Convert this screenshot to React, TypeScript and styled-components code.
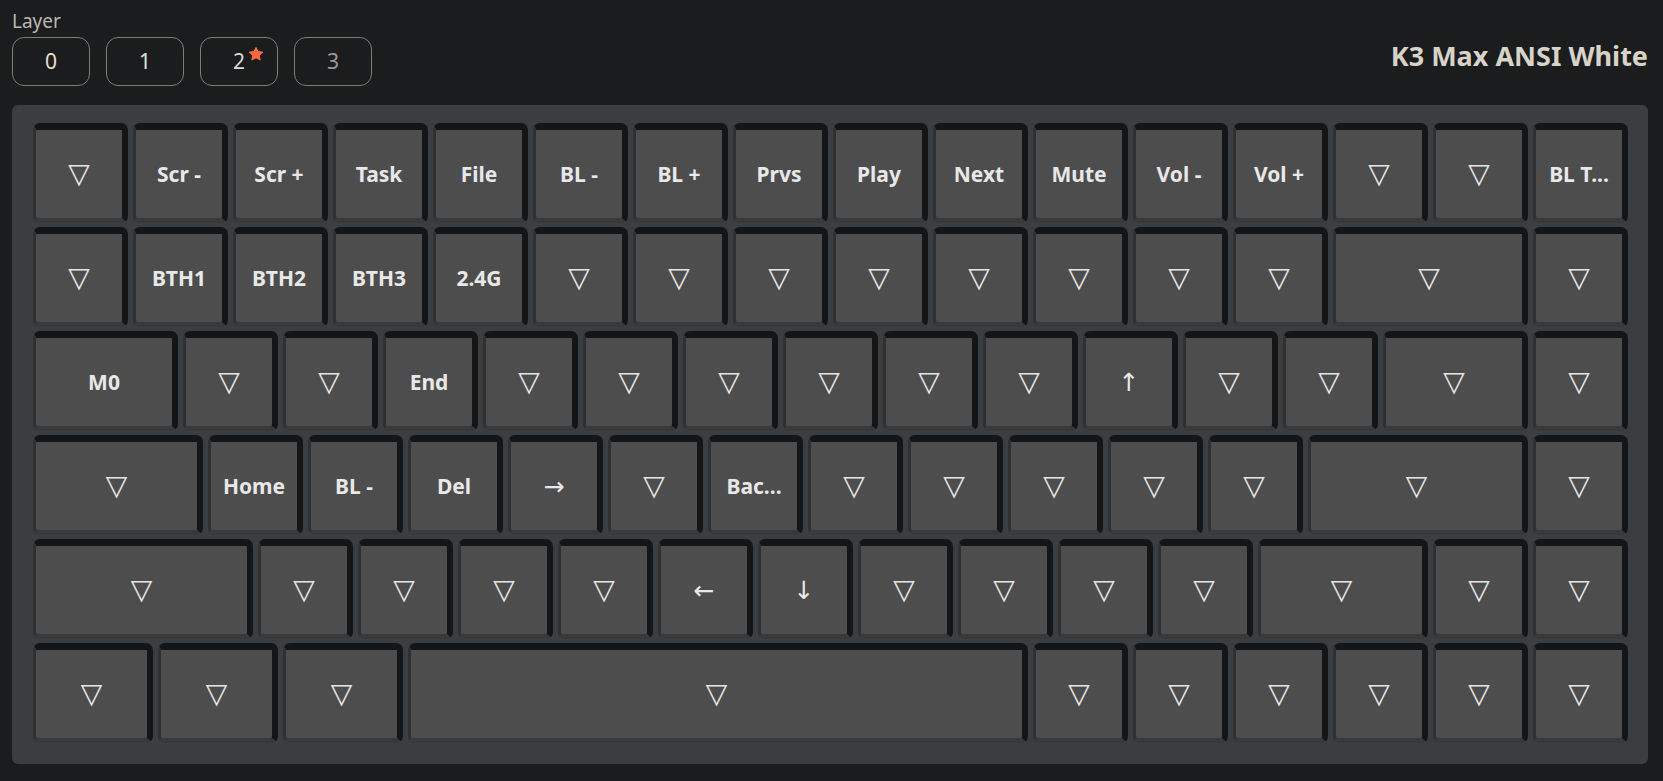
import { createGlobalStyle, styled } from "styled-components";

const GlobalStyle = createGlobalStyle`
  body {
    margin: 0;
    background: #1b1c1e;
    font-family: "Noto Sans", "Open Sans", sans-serif;
  }
`;

type KeyDef = { label: string; u?: number };

const T = "▽";
const ARROWS = ["↑", "↓", "←", "→"];
const k = (label: string, u = 1): KeyDef => ({ label, u });
const trns = (n: number): KeyDef[] => Array.from({ length: n }, () => k(T));

const rows: KeyDef[][] = [
  [
    k(T), k("Scr -"), k("Scr +"), k("Task"), k("File"), k("BL -"), k("BL +"),
    k("Prvs"), k("Play"), k("Next"), k("Mute"), k("Vol -"), k("Vol +"),
    k(T), k(T), k("BL T..."),
  ],
  [k(T), k("BTH1"), k("BTH2"), k("BTH3"), k("2.4G"), ...trns(8), k(T, 2), k(T)],
  [
    k("M0", 1.5), k(T), k(T), k("End"), ...trns(6), k("↑"), k(T), k(T),
    k(T, 1.5), k(T),
  ],
  [
    k(T, 1.75), k("Home"), k("BL -"), k("Del"), k("→"), k(T), k("Bac..."),
    ...trns(5), k(T, 2.25), k(T),
  ],
  [
    k(T, 2.25), ...trns(4), k("←"), k("↓"), ...trns(4), k(T, 1.75), k(T), k(T),
  ],
  [k(T, 1.25), k(T, 1.25), k(T, 1.25), k(T, 6.25), ...trns(6)],
];

const layers = [
  { n: "0", color: "#e4e0d6" },
  { n: "1", color: "#d6e2e2" },
  { n: "2", color: "#d9d9d6", active: true },
  { n: "3", color: "#9c9696" },
];

function KeyLabel({ label }: { label: string }) {
  if (label === T) return <Trns>{T}</Trns>;
  if (ARROWS.includes(label)) return <Arrow>{label}</Arrow>;
  return <Label>{label}</Label>;
}

function App() {
  return (
    <>
      <GlobalStyle />
      <Page>
        <Header>
          <LayerGroup>
            <LayerLabel>Layer</LayerLabel>
            <LayerButtons>
              {layers.map((l) => (
                <LayerButton key={l.n} $color={l.color}>
                  <Digit>
                    {l.n}
                    {l.active && (
                      <Star viewBox="0 0 24 24">
                        <path d="M12 2.5l2.9 6.1 6.6.8-4.9 4.6 1.3 6.6L12 17.3l-5.9 3.3 1.3-6.6-4.9-4.6 6.6-.8z" />
                      </Star>
                    )}
                  </Digit>
                </LayerButton>
              ))}
            </LayerButtons>
          </LayerGroup>
          <Title>K3 Max ANSI White</Title>
        </Header>
        <Board>
          {rows.map((row, r) => (
            <Row key={r}>
              {row.map((key, i) => (
                <Key key={i} $u={key.u ?? 1}>
                  <KeyLabel label={key.label} />
                </Key>
              ))}
            </Row>
          ))}
        </Board>
      </Page>
    </>
  );
}

const Page = styled.div`
  width: 1636px;
  padding-left: 12px;
`;

const Header = styled.div`
  display: flex;
  justify-content: space-between;
  align-items: flex-start;
  height: 105px;
`;

const LayerGroup = styled.div`
  display: flex;
  flex-direction: column;
  padding-top: 9px;
`;

const LayerLabel = styled.div`
  font-size: 19px;
  line-height: 24px;
  color: #bcb7ad;
`;

const LayerButtons = styled.div`
  display: flex;
  gap: 16px;
  margin-top: 4px;
`;

const LayerButton = styled.button<{ $color: string }>`
  box-sizing: border-box;
  width: 78px;
  height: 49px;
  border: 1.5px solid #7f7c74;
  border-radius: 12px;
  background: transparent;
  color: ${(p) => p.$color};
  font-family: inherit;
  font-size: 21px;
  display: flex;
  align-items: center;
  justify-content: center;
  padding: 0;
`;

const Digit = styled.span`
  position: relative;
  line-height: 1;
`;

const Star = styled.svg`
  position: absolute;
  left: 100%;
  top: -5px;
  margin-left: 3px;
  width: 16px;
  height: 16px;
  fill: #ff6a3c;
  stroke: #ff6a3c;
  stroke-width: 2;
  stroke-linejoin: round;
`;

const Title = styled.h1`
  margin: 38px 0 0;
  font-size: 27px;
  line-height: 36px;
  font-weight: 700;
  color: #d8d3c8;
`;

const Board = styled.div`
  display: flex;
  flex-direction: column;
  gap: 4px;
  padding: 18px 20px 21px 21px;
  background: #3b3e40;
  border-radius: 6px;
`;

const Row = styled.div`
  display: flex;
  gap: 5px;
`;

const Key = styled.div<{ $u: number }>`
  box-sizing: border-box;
  width: ${(p) => p.$u * 100 - 5}px;
  height: 100px;
  border-style: solid;
  border-width: 7px 6px 5px 3px;
  border-color: #141516 #141516 #38393a #2f3031;
  border-radius: 7px;
  background: #4d4d4d;
  display: flex;
  align-items: center;
  justify-content: center;
  overflow: hidden;
`;

const Label = styled.span`
  font-size: 21px;
  font-weight: 700;
  color: #e8e8e8;
  white-space: nowrap;
`;

const Arrow = styled.span`
  font-family: "DejaVu Sans", sans-serif;
  font-size: 25px;
  line-height: 1;
  color: #e8e8e8;
`;

const Trns = styled.span`
  font-family: "DejaVu Sans", sans-serif;
  font-size: 28px;
  line-height: 1;
  color: #e6e6e6;
`;

export default App;
